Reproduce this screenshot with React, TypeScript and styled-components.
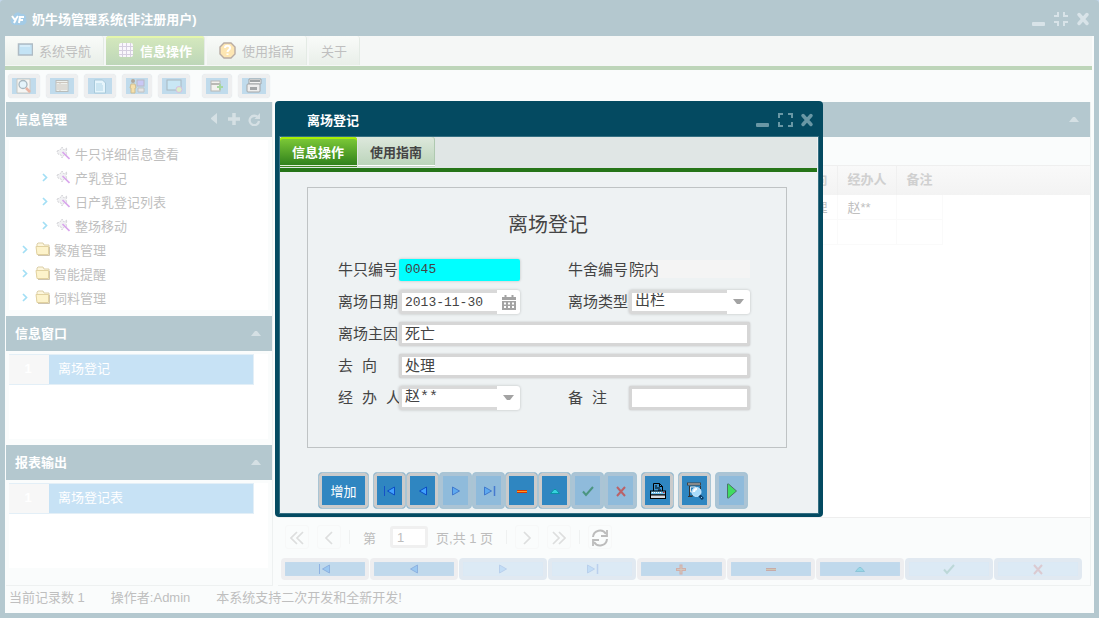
import React from "react";
import styled, { createGlobalStyle, css } from "styled-components";

const frame = "#b4c8cf";
const navy = "#044a61";
const uiFont = `"Liberation Sans", "Noto Sans CJK SC", sans-serif`;
const monoFont = `"Liberation Mono", "Noto Sans CJK SC", monospace`;

const GlobalStyle = createGlobalStyle`
  * { box-sizing: border-box; }
  body { margin: 0; background: #c3d6ea; font-family: ${uiFont}; font-size: 13px; color: #bfbfbf; }
  button, input, select { font: inherit; color: inherit; margin: 0; padding: 0; border: 0; background: none; outline: none; }
  h1, h2, h3, p, ul, fieldset { margin: 0; padding: 0; font-size: inherit; list-style: none; border: 0; }
  svg { display: block; flex: none; }
`;

/* ---------- main window ---------- */
const Desktop = styled.div`
  position: relative;
  display: flex;
  flex-direction: column;
  min-height: 100vh;
  padding: 0 5px 5px;
  background: ${frame};
  border-radius: 4px 4px 0 0;
`;
const TitleBar = styled.header`
  display: flex;
  align-items: center;
  height: 36px;
  padding: 1px 3px 0 5px;
  gap: 5px;
  color: #fff;
  h1 { flex: 1; font-weight: bold; }
`;
const WindowTools = styled.div<{ $color: string }>`
  display: flex;
  gap: 6px;
  color: ${(p) => p.$color};
  button { display: flex; padding: 0; }
`;
const WindowBody = styled.main`
  flex: 1;
  display: flex;
  flex-direction: column;
  background: #fafcfc;
`;
const TabBar = styled.nav<{ $main?: boolean }>`
  display: flex;
  gap: ${(p) => (p.$main ? 2 : 1)}px;
  height: ${(p) => (p.$main ? 34 : 35)}px;
  margin-right: ${(p) => (p.$main ? 2 : 1)}px;
  background: ${(p) => (p.$main ? "#f5f7f6" : "#e0e6e5")};
  border-bottom: 4px solid ${(p) => (p.$main ? "#bdd5b9" : "#267518")};
`;
const MainTab = styled.button<{ $active?: boolean }>`
  display: flex;
  align-items: center;
  gap: 6px;
  height: 29px;
  padding: 0 12px 1px;
  border-right: 1px solid #e4ebe5;
  border-radius: 3px 3px 0 0;
  background: linear-gradient(#f9fbf9, #e9efe9);
  ${(p) =>
    p.$active &&
    css`
      color: #fff;
      font-weight: bold;
      background: linear-gradient(#d5e9bd, #bdd6b8);
      box-shadow: inset 0 2px 0 #e4f6ac;
    `}
`;
const ToolBar = styled.div`
  display: flex;
  align-items: center;
  gap: 6px;
  height: 32px;
  padding-left: 3px;
`;
const ToolButton = styled.button<{ $gap?: boolean; $narrow?: boolean }>`
  display: flex;
  align-items: center;
  justify-content: center;
  width: ${(p) => (p.$narrow ? 30 : 32)}px;
  height: 24px;
  margin-left: ${(p) => (p.$gap ? 6 : 0)}px;
  border: 4px solid #eeeff0;
  border-radius: 4px;
  background: #c0dbec;
  box-shadow: 0 0 1px #cfdce3;
`;

const Columns = styled.div`
  flex: 1;
  display: flex;
  gap: 5px;
  padding: 0 3px 0 1px;
`;
const Side = styled.aside`
  display: flex;
  flex-direction: column;
  width: 267px;
  flex: none;
  border-right: 1px solid #eef1f1;
  border-bottom: 1px solid #eef1f1;
`;
const PanelHead = styled.div`
  display: flex;
  align-items: center;
  justify-content: space-between;
  height: 35px;
  padding: 0 9px 2px;
  background: ${frame};
  color: #fff;
  h2 { font-weight: bold; }
`;
const HeadTools = styled.div`
  display: flex;
  align-items: center;
  gap: 8px;
  padding-right: 2px;
  color: #d5e0e4;
  button { display: flex; }
`;
const PanelBody = styled.div<{ $min: number }>`
  min-height: ${(p) => p.$min}px;
  margin: 3px 4px 6px 3px;
  background: #fff;
`;
const TreeRow = styled.li<{ $level: number }>`
  display: flex;
  align-items: center;
  height: 24px;
  padding-left: ${(p) => (p.$level === 2 ? 30 : 10)}px;
  button { display: flex; align-items: center; gap: ${(p) => (p.$level === 2 ? 4 : 3)}px; padding-top: 2px; }
`;
const Expander = styled.span`
  width: 16px;
  display: flex;
  padding: 3px 0 0 3px;
`;
const LeafIcon = styled.span`
  width: 16px;
  display: flex;
  justify-content: center;
`;
const ListRow = styled.li`
  display: flex;
  width: 245px;
  height: 31px;
  border: 1px solid #e3eff7;
  border-left: 0;
  background: #c7e2f5;
  color: #fff;
  span { width: 40px; line-height: 28px; text-align: center; font-weight: bold; background: #f7f7f7; padding-right: 2px; }
  button { flex: 1; padding: 0 0 5px 9px; text-align: left; }
`;

const MainPanel = styled.section`
  flex: 1;
  min-width: 0;
  display: flex;
  flex-direction: column;
  border-right: 1px solid #eef1f1;
  border-bottom: 1px solid #eef1f1;
`;
const GridArea = styled.div`
  flex: 1;
  margin-top: 28px;
  background: #fff;
  border-bottom: 1px solid #eeeeee;
`;
const DataTable = styled.table`
  width: 100%;
  table-layout: fixed;
  border-collapse: collapse;
  border-spacing: 0;
  th { height: 29px; padding: 0 0 3px 10px; text-align: left; font-weight: bold; color: #d0d0d0; border-right: 1px solid #f0f0f0; border-top: 1px solid #efefef; }
  thead tr { background: linear-gradient(#f9f9f9, #f3f3f3); }
  td { height: 25px; padding: 0 0 1px 10px; border-right: 1px solid #fafafa; border-bottom: 1px solid #fafafa; }
  th:nth-child(n + 4), td:last-child { border-right: 0; }
  td:last-child { border-bottom: 0; }
`;
const Pager = styled.div`
  display: flex;
  align-items: center;
  height: 38px;
  padding-left: 7px;
  color: #bdbdbd;
`;
const PageButton = styled.button<{ $strong?: boolean }>`
  display: flex;
  align-items: center;
  justify-content: center;
  width: 24px;
  height: 24px;
  margin-right: 8px;
  padding-top: 2px;
  border: 1px solid #f7f8f8;
  border-radius: 3px;
  color: ${(p) => (p.$strong ? "#bcbcbc" : "#dddede")};
`;
const Divider = styled.i`
  width: 1px;
  height: 14px;
  margin-right: 8px;
  background: #eff1f1;
`;
const PageField = styled.label`
  display: flex;
  align-items: center;
  gap: 14px;
  margin: 0 8px 0 5px;
  input { width: 38px; height: 22px; padding-left: 4px; background: #fff; border: 3px solid #f0f0f0; border-radius: 3px; }
`;
const PageTotal = styled.span`
  width: 70px;
`;
const RecordBar = styled.div`
  display: flex;
  height: 29px;
  padding: 2px 8px 5px 3px;
  gap: 1px;
`;
const RecordButton = styled.button<{ $off?: boolean }>`
  flex: 1;
  display: flex;
  align-items: center;
  justify-content: center;
  border: 4px solid ${(p) => (p.$off ? "#e1e9f1" : "#eeeef0")};
  border-radius: 4px;
  background: ${(p) => (p.$off ? "#dceaf5" : "#c0d9ec")};
  box-shadow: inset 0 0 1px #d2e2ee;
  svg { opacity: ${(p) => (p.$off ? 0.16 : 0.28)}; }
`;
const StatusBar = styled.footer`
  display: flex;
  gap: 26px;
  height: 27px;
  padding: 0 4px;
  line-height: 24px;
`;

/* ---------- registration window ---------- */
const Dialog = styled.section`
  position: absolute;
  left: 275px;
  top: 101px;
  width: 548px;
  padding: 0 5px 4px;
  border-radius: 4px;
  background: ${navy};
  color: #444;
`;
const DialogTitle = styled.header`
  display: flex;
  align-items: center;
  height: 36px;
  padding: 1px 3px 0 27px;
  color: #fff;
  h2 { flex: 1; font-weight: bold; padding-bottom: 1px; }
`;
const DialogBody = styled.div`
  background: #eef2f3;
  box-shadow: 0 0 0 1px #356f82;
`;
const DialogTab = styled.button<{ $active?: boolean }>`
  height: 30px;
  padding: 0 13px 2px 12px;
  border-radius: 3px 3px 0 0;
  font-weight: bold;
  color: ${(p) => (p.$active ? "#fff" : "#444")};
  background: ${(p) => (p.$active ? "linear-gradient(#80cc38, #2b7c1b)" : "linear-gradient(#dde8dc, #b9d3b8)")};
  box-shadow: ${(p) =>
    p.$active
      ? "inset 0 2px 0 #a7ee06, inset 0 -1px 0 #3b8a20, inset 0 -2px 0 #e4f0d8"
      : "inset 0 -1px 0 #c5d8c6, inset 0 -2px 0 #fff, inset -1px 0 0 #afc9b0"};
`;
const FormBox = styled.fieldset`
  margin: 15px 31px 24px 27px;
  padding: 0 36px 33px 30px;
  border: 1px solid #bfc3c4;
`;
const FormTitle = styled.h3`
  height: 66px;
  padding: 8px 0 0 8px;
  font-size: 20px;
  line-height: 58px;
  font-weight: normal;
  text-align: center;
`;
const FormRow = styled.div`
  display: grid;
  grid-template-columns: 61px 121px 1fr 61px 121px;
  align-items: center;
  height: 32px;
  font-family: ${monoFont};
  font-size: 15px;
  label { grid-column-start: 1; white-space: nowrap; line-height: 24px; padding-top: 4px; }
`;
const Second = styled.label`
  && { grid-column-start: 4; }
`;
const shade = "0 0 3px rgba(0, 0, 0, 0.22)";
const TextField = styled.input<{ $wide?: boolean }>`
  grid-column: ${(p) => (p.$wide ? "2 / -1" : "auto")};
  width: 100%;
  height: 24px;
  padding: 0 3px 2px;
  border: 3px solid #d6d6d6;
  border-radius: 2px;
  background: #fff;
  line-height: 18px;
  box-shadow: 0 0 2px #bbb;
`;
const KeyField = styled.input`
  width: 100%;
  height: 22px;
  padding: 0 6px 2px;
  border-radius: 2px;
  background: #00ffff;
  font-size: 13px;
  box-shadow: ${shade};
`;
const PlainField = styled.input`
  width: 100%;
  height: 18px;
  margin-bottom: 2px;
  background: #f4f4f4;
`;
const Combo = styled.div`
  display: flex;
  height: 24px;
  border-radius: 3px;
  background: #fff;
  box-shadow: ${shade};
  overflow: hidden;
  input, select {
    flex: 1;
    min-width: 0;
    appearance: none;
    height: 24px;
    padding: 0 0 0 3px;
    border: 3px solid #d9d9d9;
    border-right: 0;
    line-height: 18px;
  }
  input { font-size: 13px; }
`;
const ComboEnd = styled.span`
  display: flex;
  align-items: center;
  justify-content: center;
  width: 23px;
  color: #a3a3a3;
  button { display: flex; }
`;
const ActionBar = styled.div`
  display: flex;
  gap: 4px;
  padding: 0 0 4px 38px;
`;
const ActionGroup = styled.div`
  display: flex;
`;
const Action = styled.button<{ $off?: boolean; $wide?: boolean }>`
  display: flex;
  align-items: center;
  justify-content: center;
  width: ${(p) => (p.$wide ? 51 : 33)}px;
  height: 37px;
  color: #fff;
  border: 1px solid #a9c5d4;
  border-radius: 4px;
  background: #2f86c1;
  box-shadow: inset 0 0 0 3px #cbcbcb;
  ${(p) =>
    p.$off &&
    css`
      background: #8fbbdb;
      border-color: #a9c5d4;
      box-shadow: inset 0 0 0 3px #abc4d5;
      svg { opacity: 0.6; }
    `}
`;
const RunAction = styled(Action)`
  svg { opacity: 1; }
`;

/* ---------- drawings ---------- */
type Glyph = "first" | "prev" | "next" | "last" | "plus" | "minus" | "up" | "ok" | "no";
const Mark = ({ kind }: { kind: Glyph }) => (
  <svg width="14" height="12" viewBox="0 0 14 12">
    {kind === "first" && <><path d="M1.500 1v10" stroke="#1550c8" /><path d="M11.500 2v8L4.500 6z" fill="#3fa0ff" stroke="#0b4dc4" /></>}
    {kind === "prev" && <path d="M10.500 2v8L3.500 6z" fill="#3fa0ff" stroke="#0b4dc4" />}
    {kind === "next" && <path d="M3.500 2v8l7-4z" fill="#3fa0ff" stroke="#0b4dc4" />}
    {kind === "last" && <><path d="M12.500 1v10" stroke="#1550c8" strokeWidth="1.500" /><path d="M2.500 2v8l7-4z" fill="#3fa0ff" stroke="#0b4dc4" /></>}
    {kind === "plus" && <><path d="M2 6.500h10M7 1.500v10" stroke="#ff4400" strokeWidth="3" /><path d="M3 6.500h8M7 2.500v8" stroke="#ffa050" /></>}
    {kind === "minus" && <><path d="M2 6.500h10" stroke="#d93800" strokeWidth="3" /><path d="M2 6.500h10" stroke="#ff9a1f" /></>}
    {kind === "up" && <path d="M2.500 8.500h9L8 4.500H6z" fill="#35d3dd" stroke="#0a95a5" />}
    {kind === "ok" && <path d="M2 6.500l3 3.500L12 2" fill="none" stroke="#1f7d45" strokeWidth="2" />}
    {kind === "no" && <path d="M3 2l8 9M11 2l-8 9" stroke="#d8281c" strokeWidth="2" />}
  </svg>
);
const MinIcon = () => (
  <svg width="16" height="16" viewBox="0 0 16 16"><rect x="1" y="11" width="13" height="4" rx="1" fill="currentColor" /></svg>
);
const MaxIcon = () => (
  <svg width="16" height="16" viewBox="0 0 16 16"><path d="M2 6V2h4M11 2h4v4M15 10v4h-4M6 14H2v-4" fill="none" stroke="currentColor" strokeWidth="2" /></svg>
);
const RestoreIcon = () => (
  <svg width="16" height="16" viewBox="0 0 16 16"><path d="M5 1v4H1M11 1v4h4M15 11h-4v4M1 11h4v4" fill="none" stroke="currentColor" strokeWidth="2" /></svg>
);
const CloseIcon = () => (
  <svg width="16" height="16" viewBox="0 0 16 16"><path d="M4 3.500l8 9M12 3.500l-8 9" stroke="currentColor" strokeWidth="3.500" strokeLinecap="round" /></svg>
);
const CollapseIcon = () => (
  <svg width="10" height="6" viewBox="0 0 10 6"><path d="M0 6h10L6 1H4z" fill="currentColor" /></svg>
);
const Logo = () => (
  <svg width="17" height="14" viewBox="0 0 17 14">
    <path d="M4 3a4 4 0 017-1 4 4 0 015 5 4 4 0 01-4 6H5A4 4 0 012 6z" fill="#a3cbe6" />
    <path d="M2 4l3 4 3-4M6 7l-2 4M9 11l1-6h4M10 8h3" fill="none" stroke="#fff" strokeWidth="2" />
  </svg>
);
const WindowIcon = () => (
  <svg width="16" height="16" viewBox="0 0 16 16"><rect x="1.500" y="2" width="14" height="11" fill="#c3e3f5" stroke="#aebbc4" strokeWidth="1.500" /><path d="M3 4h10" stroke="#d7edf9" strokeWidth="2" /></svg>
);
const GridIcon = () => (
  <svg width="16" height="16" viewBox="0 0 16 16"><rect x="1" y="1" width="14" height="14" rx="2" fill="#faf7fc" /><path d="M1 4.500h14M1 8.500h14M1 12.500h14M4.500 1v14M8.500 1v14M12.500 1v14" stroke="#d6cfe0" /></svg>
);
const HelpIcon = () => (
  <svg width="17" height="17" viewBox="0 0 17 17">
    <path d="M5 1h7l4 4v7l-4 4H5l-4-4V5z" fill="#fde6b3" stroke="#b9aca4" strokeWidth="1.400" />
    <path d="M6 6c0-3 5-3 5 0 0 2-2.500 2-2.500 4M8.500 11.500v1.500" fill="none" stroke="#fff" strokeWidth="2" />
  </svg>
);
const Chevron = () => (
  <svg width="6" height="9" viewBox="0 0 6 9"><path d="M1 1l3.500 3.500L1 8" fill="none" stroke="#a3dff5" strokeWidth="1.700" /></svg>
);
const WandIcon = () => (
  <svg width="14" height="14" viewBox="0 0 14 14">
    <path d="M1 5l3-1 2-3 2 3 3-2-1 4 1 3-3 0-2 3-1-3-3-1z" fill="#f1f1f3" stroke="#d5d5d9" strokeDasharray="2 1" />
    <path d="M6.500 6l7 7" stroke="#d9a6ec" strokeWidth="1.700" />
  </svg>
);
const FolderIcon = () => (
  <svg width="16" height="14" viewBox="0 0 16 14">
    <path d="M2 11V2l1-1h5l1 2h5v8" fill="#fdf6dc" stroke="#dccfa9" />
    <path d="M1 4.500h12.500V12.500H2z" fill="#fdf3cb" stroke="#e2d2a0" />
    <path d="M14.500 5v8.500H3" fill="none" stroke="#cfc5b0" />
  </svg>
);
const SearchPageIcon = () => (
  <svg width="16" height="16" viewBox="0 0 16 16"><path d="M1 1h13v14H1z" fill="#f5f5f3" stroke="#c9c9c4" /><circle cx="7" cy="6.500" r="4" fill="#e5f4fb" stroke="#a8b8c0" strokeWidth="1.300" /><path d="M10 10l4 4" stroke="#e9b4a4" strokeWidth="2.500" /></svg>
);
const LayoutIcon = () => (
  <svg width="14" height="14" viewBox="0 0 14 14"><rect x="1" y="1.500" width="12" height="11" fill="#eef1ee" stroke="#b9bdbb" /><path d="M1 3.500h12M5 4v8M6 6h6M6 8h6M6 10h6M2 6h2M2 8h2M2 10h2" stroke="#cdc6be" /></svg>
);
const PageIcon = () => (
  <svg width="14" height="15" viewBox="0 0 14 15"><path d="M1.500 1h8l3 3v10h-11z" fill="#e6f5fc" stroke="#a9cadb" /><path d="M3 5h6M3 7h7M3 9h7M3 11h7" stroke="#b1d6e8" /></svg>
);
const UserIcon = () => (
  <svg width="16" height="16" viewBox="0 0 16 16"><rect x="8" y="2" width="7" height="6" fill="#c9c8f5" stroke="#b9b9c4" /><path d="M9 10h6v4H9z" fill="#e4e4e4" stroke="#c2c2c2" /><circle cx="4" cy="3" r="2" fill="#b1a89b" /><path d="M2 6h4l1 4H6v5H2v-5H1z" fill="#f6e0a9" stroke="#cdbd93" /></svg>
);
const ScreenIcon = () => (
  <svg width="17" height="15" viewBox="0 0 17 15"><rect x="1" y="1" width="14" height="10" fill="#c9e7f5" stroke="#a8b8c0" /><circle cx="13" cy="10.500" r="3" fill="#dbeec8" stroke="#d9bde0" /></svg>
);
const AddTableIcon = () => (
  <svg width="14" height="14" viewBox="0 0 14 14"><rect x="1" y="2" width="9" height="10" fill="#f2f2ee" stroke="#b8b8b4" /><path d="M1 5h9" stroke="#b9b9b4" strokeWidth="2" /><path d="M10 5v6M7 8h6" stroke="#a7d7a0" strokeWidth="2" /></svg>
);
const FormIcon = () => (
  <svg width="16" height="16" viewBox="0 0 16 16"><path d="M3 1h12v5H3z" fill="#f4f4f4" stroke="#9fa3a5" /><path d="M4 3h10" stroke="#9fa3a5" strokeWidth="2" /><rect x="1" y="6" width="13" height="8" rx="1" fill="#eee" stroke="#a3a6a8" /><rect x="4" y="9" width="7" height="3" fill="#a3a6a8" /></svg>
);
const CalendarIcon = () => (
  <svg width="16" height="17" viewBox="0 0 16 17">
    <path d="M1 3h14v3H1zM1 7h14v9H1z" fill="currentColor" />
    <path d="M4.500 1v3M11.500 1v3" stroke="currentColor" strokeWidth="2" />
    <path d="M3 9.500h2M7 9.500h2M11 9.500h2M3 13h2M7 13h2M11 13h2" stroke="#fff" strokeWidth="2" />
  </svg>
);
const DownIcon = () => (
  <svg width="11" height="6" viewBox="0 0 11 6"><path d="M0 0h11L7 5H4z" fill="currentColor" /></svg>
);
const PrinterIcon = () => (
  <svg width="18" height="18" viewBox="0 0 18 18">
    <path d="M4.500 9V1.500h6l3 3V9" fill="#3a93d0" stroke="#000" />
    <path d="M10.500 1.500v3h3M6 4h2M6 6h5M9 8h3" fill="none" stroke="#000" />
    <rect x="1.500" y="9" width="15" height="4" fill="#73c2ee" stroke="#000" />
    <path d="M3 10.500h9" stroke="#fff" strokeDasharray="1 1" />
    <path d="M14 10.500h1.500" stroke="#d22" />
    <rect x="1.500" y="13" width="15" height="3.500" fill="#d8dde2" stroke="#000" />
  </svg>
);
const PreviewIcon = () => (
  <svg width="18" height="18" viewBox="0 0 18 18">
    <path d="M1 2h14" stroke="#444" strokeWidth="3" />
    <path d="M2 2h12" stroke="#ccc" />
    <path d="M3.500 4v10H7M2 14.500h4M14.500 4v3" fill="none" stroke="#333" />
    <path d="M4.500 5h5v5h-5z" fill="#2f86c1" stroke="#ddd" />
    <circle cx="10.500" cy="10" r="4.500" fill="#a9dbfa" stroke="#cfeaff" />
    <path d="M8 10a3 3 0 013-3" fill="none" stroke="#fff" strokeWidth="2" />
    <path d="M13.500 13.500L17 17" stroke="#0c3b66" strokeWidth="3" />
    <path d="M15 15l1 1" stroke="#8fd4ff" />
  </svg>
);
const RunIcon = () => (
  <svg width="12" height="16" viewBox="0 0 12 16"><path d="M1.500 1v14h1l8-7-8-7z" fill="#3fdc62" stroke="#4b7468" /></svg>
);
const Arrows = ({ d }: { d: string }) => (
  <svg width="14" height="14" viewBox="0 0 14 14"><path d={d} fill="none" stroke="currentColor" strokeWidth="1.700" /></svg>
);
const RefreshIcon = () => (
  <svg width="18" height="18" viewBox="0 0 18 18">
    <path d="M2 8a7 7 0 0113-3M16 10a7 7 0 01-13 3" fill="none" stroke="currentColor" strokeWidth="2" />
    <path d="M16 1v6h-6M2 17v-6h6" fill="none" stroke="currentColor" strokeWidth="1.800" />
  </svg>
);

const tools = [
  { name: "查询", icon: <SearchPageIcon /> },
  { name: "布局", icon: <LayoutIcon /> },
  { name: "文档", icon: <PageIcon /> },
  { name: "用户", icon: <UserIcon />, narrow: true },
  { name: "屏幕", icon: <ScreenIcon /> },
  { name: "添加", icon: <AddTableIcon />, gap: true, narrow: true },
  { name: "表单", icon: <FormIcon /> },
];
const tree = [
  { text: "牛只详细信息查看", level: 2, leaf: true },
  { text: "产乳登记", level: 2 },
  { text: "日产乳登记列表", level: 2 },
  { text: "整场移动", level: 2 },
  { text: "繁殖管理", level: 1 },
  { text: "智能提醒", level: 1 },
  { text: "饲料管理", level: 1 },
];
const marks: { kind: Glyph; name: string; off?: boolean }[] = [
  { kind: "first", name: "首条" },
  { kind: "prev", name: "上一条" },
  { kind: "next", name: "下一条", off: true },
  { kind: "last", name: "末条", off: true },
  { kind: "plus", name: "新增" },
  { kind: "minus", name: "删除" },
  { kind: "up", name: "编辑" },
  { kind: "ok", name: "保存", off: true },
  { kind: "no", name: "取消", off: true },
];

const ListPanel = ({ title, item, min }: { title: string; item: string; min: number }) => (
  <>
    <PanelHead>
      <h2>{title}</h2>
      <HeadTools><button aria-label="折叠"><CollapseIcon /></button></HeadTools>
    </PanelHead>
    <PanelBody $min={min}>
      <ul><ListRow><span>1</span><button>{item}</button></ListRow></ul>
    </PanelBody>
  </>
);

const RegisterWindow = () => (
  <Dialog aria-label="离场登记">
    <DialogTitle>
      <h2>离场登记</h2>
      <WindowTools $color="#6997a5">
        <button aria-label="最小化"><MinIcon /></button>
        <button aria-label="最大化"><MaxIcon /></button>
        <button aria-label="关闭"><CloseIcon /></button>
      </WindowTools>
    </DialogTitle>
    <DialogBody>
      <TabBar>
        <DialogTab $active>信息操作</DialogTab>
        <DialogTab>使用指南</DialogTab>
      </TabBar>
      <FormBox>
        <FormTitle>离场登记</FormTitle>
        <FormRow>
          <label htmlFor="cow">牛只编号</label>
          <KeyField id="cow" defaultValue="0045" />
          <Second htmlFor="barn">牛舍编号</Second>
          <PlainField id="barn" readOnly value="院内" />
        </FormRow>
        <FormRow>
          <label htmlFor="date">离场日期</label>
          <Combo>
            <input id="date" defaultValue="2013-11-30" />
            <ComboEnd><button aria-label="选择日期"><CalendarIcon /></button></ComboEnd>
          </Combo>
          <Second htmlFor="type">离场类型</Second>
          <Combo>
            <select id="type"><option>出栏</option></select>
            <ComboEnd aria-hidden><DownIcon /></ComboEnd>
          </Combo>
        </FormRow>
        <FormRow>
          <label htmlFor="reason">离场主因</label>
          <TextField id="reason" $wide defaultValue="死亡" />
        </FormRow>
        <FormRow>
          <label htmlFor="whither">去 向</label>
          <TextField id="whither" $wide defaultValue="处理" />
        </FormRow>
        <FormRow>
          <label htmlFor="agent">经 办 人</label>
          <Combo>
            <select id="agent"><option>赵**</option></select>
            <ComboEnd aria-hidden><DownIcon /></ComboEnd>
          </Combo>
          <Second htmlFor="note">备 注</Second>
          <TextField id="note" />
        </FormRow>
      </FormBox>
      <ActionBar>
        <Action $wide>增加</Action>
        <ActionGroup>
          {marks.filter((m) => m.kind !== "plus").map((m) => (
            <Action key={m.kind} $off={m.off} aria-label={m.name}><Mark kind={m.kind} /></Action>
          ))}
        </ActionGroup>
        <Action aria-label="打印"><PrinterIcon /></Action>
        <Action aria-label="预览"><PreviewIcon /></Action>
        <RunAction $off aria-label="执行"><RunIcon /></RunAction>
      </ActionBar>
    </DialogBody>
  </Dialog>
);

export default function App() {
  return (
    <>
      <GlobalStyle />
      <Desktop>
        <TitleBar>
          <Logo />
          <h1>奶牛场管理系统(非注册用户)</h1>
          <WindowTools $color="#d8e3e8">
            <button aria-label="最小化"><MinIcon /></button>
            <button aria-label="还原"><RestoreIcon /></button>
            <button aria-label="关闭"><CloseIcon /></button>
          </WindowTools>
        </TitleBar>
        <WindowBody>
          <TabBar $main>
            <MainTab><WindowIcon />系统导航</MainTab>
            <MainTab $active><GridIcon />信息操作</MainTab>
            <MainTab><HelpIcon />使用指南</MainTab>
            <MainTab>关于</MainTab>
          </TabBar>
          <ToolBar>
            {tools.map((t) => (
              <ToolButton key={t.name} $gap={t.gap} $narrow={t.narrow} aria-label={t.name}>{t.icon}</ToolButton>
            ))}
          </ToolBar>
          <Columns>
            <Side>
              <PanelHead>
                <h2>信息管理</h2>
                <HeadTools>
                  <button aria-label="收起">
                    <svg width="12" height="12" viewBox="0 0 12 12"><path d="M9 0v11L3 6V5z" fill="currentColor" /></svg>
                  </button>
                  <button aria-label="展开">
                    <svg width="12" height="12" viewBox="0 0 12 12"><path d="M6 0v12M0 6h12" stroke="currentColor" strokeWidth="3.500" /></svg>
                  </button>
                  <button aria-label="刷新">
                    <svg width="13" height="14" viewBox="0 0 13 14"><path d="M10 5.500A4.700 4.700 0 1011 9" fill="none" stroke="currentColor" strokeWidth="2.300" /><path d="M12 1v6H6.500z" fill="currentColor" /></svg>
                  </button>
                </HeadTools>
              </PanelHead>
              <PanelBody $min={170}>
                <ul>
                  {tree.map((n) => (
                    <TreeRow key={n.text} $level={n.level}>
                      <Expander>{!n.leaf && <Chevron />}</Expander>
                      <button>
                        {n.level === 2 ? <LeafIcon><WandIcon /></LeafIcon> : <FolderIcon />}
                        {n.text}
                      </button>
                    </TreeRow>
                  ))}
                </ul>
              </PanelBody>
              <ListPanel title="信息窗口" item="离场登记" min={85} />
              <ListPanel title="报表输出" item="离场登记表" min={85} />
            </Side>
            <MainPanel>
              <PanelHead>
                <h2 />
                <HeadTools><button aria-label="折叠"><CollapseIcon /></button></HeadTools>
              </PanelHead>
              <GridArea>
                <DataTable>
                  <colgroup>
                    <col style={{ width: 513 }} />
                    <col style={{ width: 46 }} />
                    <col style={{ width: 59 }} />
                    <col style={{ width: 46 }} />
                    <col />
                  </colgroup>
                  <thead>
                    <tr><th /><th>去向</th><th>经办人</th><th>备注</th><th /></tr>
                  </thead>
                  <tbody>
                    <tr><td /><td>处理</td><td>赵**</td><td /><td /></tr>
                    <tr><td /><td /><td /><td /><td /></tr>
                  </tbody>
                </DataTable>
              </GridArea>
              <Pager>
                <PageButton aria-label="首页"><Arrows d="M7 1L1 7l6 6M13 1L7 7l6 6" /></PageButton>
                <PageButton aria-label="上一页"><Arrows d="M10 1L4 7l6 6" /></PageButton>
                <Divider />
                <PageField>第<input defaultValue="1" /></PageField>
                <PageTotal>页,共 1 页</PageTotal>
                <Divider />
                <PageButton aria-label="下一页"><Arrows d="M4 1l6 6-6 6" /></PageButton>
                <PageButton aria-label="末页"><Arrows d="M1 1l6 6-6 6M7 1l6 6-6 6" /></PageButton>
                <Divider />
                <PageButton $strong aria-label="刷新"><RefreshIcon /></PageButton>
              </Pager>
              <RecordBar>
                {marks.map((m) => (
                  <RecordButton key={m.kind} $off={m.off} aria-label={m.name}><Mark kind={m.kind} /></RecordButton>
                ))}
              </RecordBar>
            </MainPanel>
          </Columns>
          <StatusBar>
            <span>当前记录数 1</span>
            <span>操作者:Admin</span>
            <span>本系统支持二次开发和全新开发!</span>
          </StatusBar>
        </WindowBody>
        <RegisterWindow />
      </Desktop>
    </>
  );
}
